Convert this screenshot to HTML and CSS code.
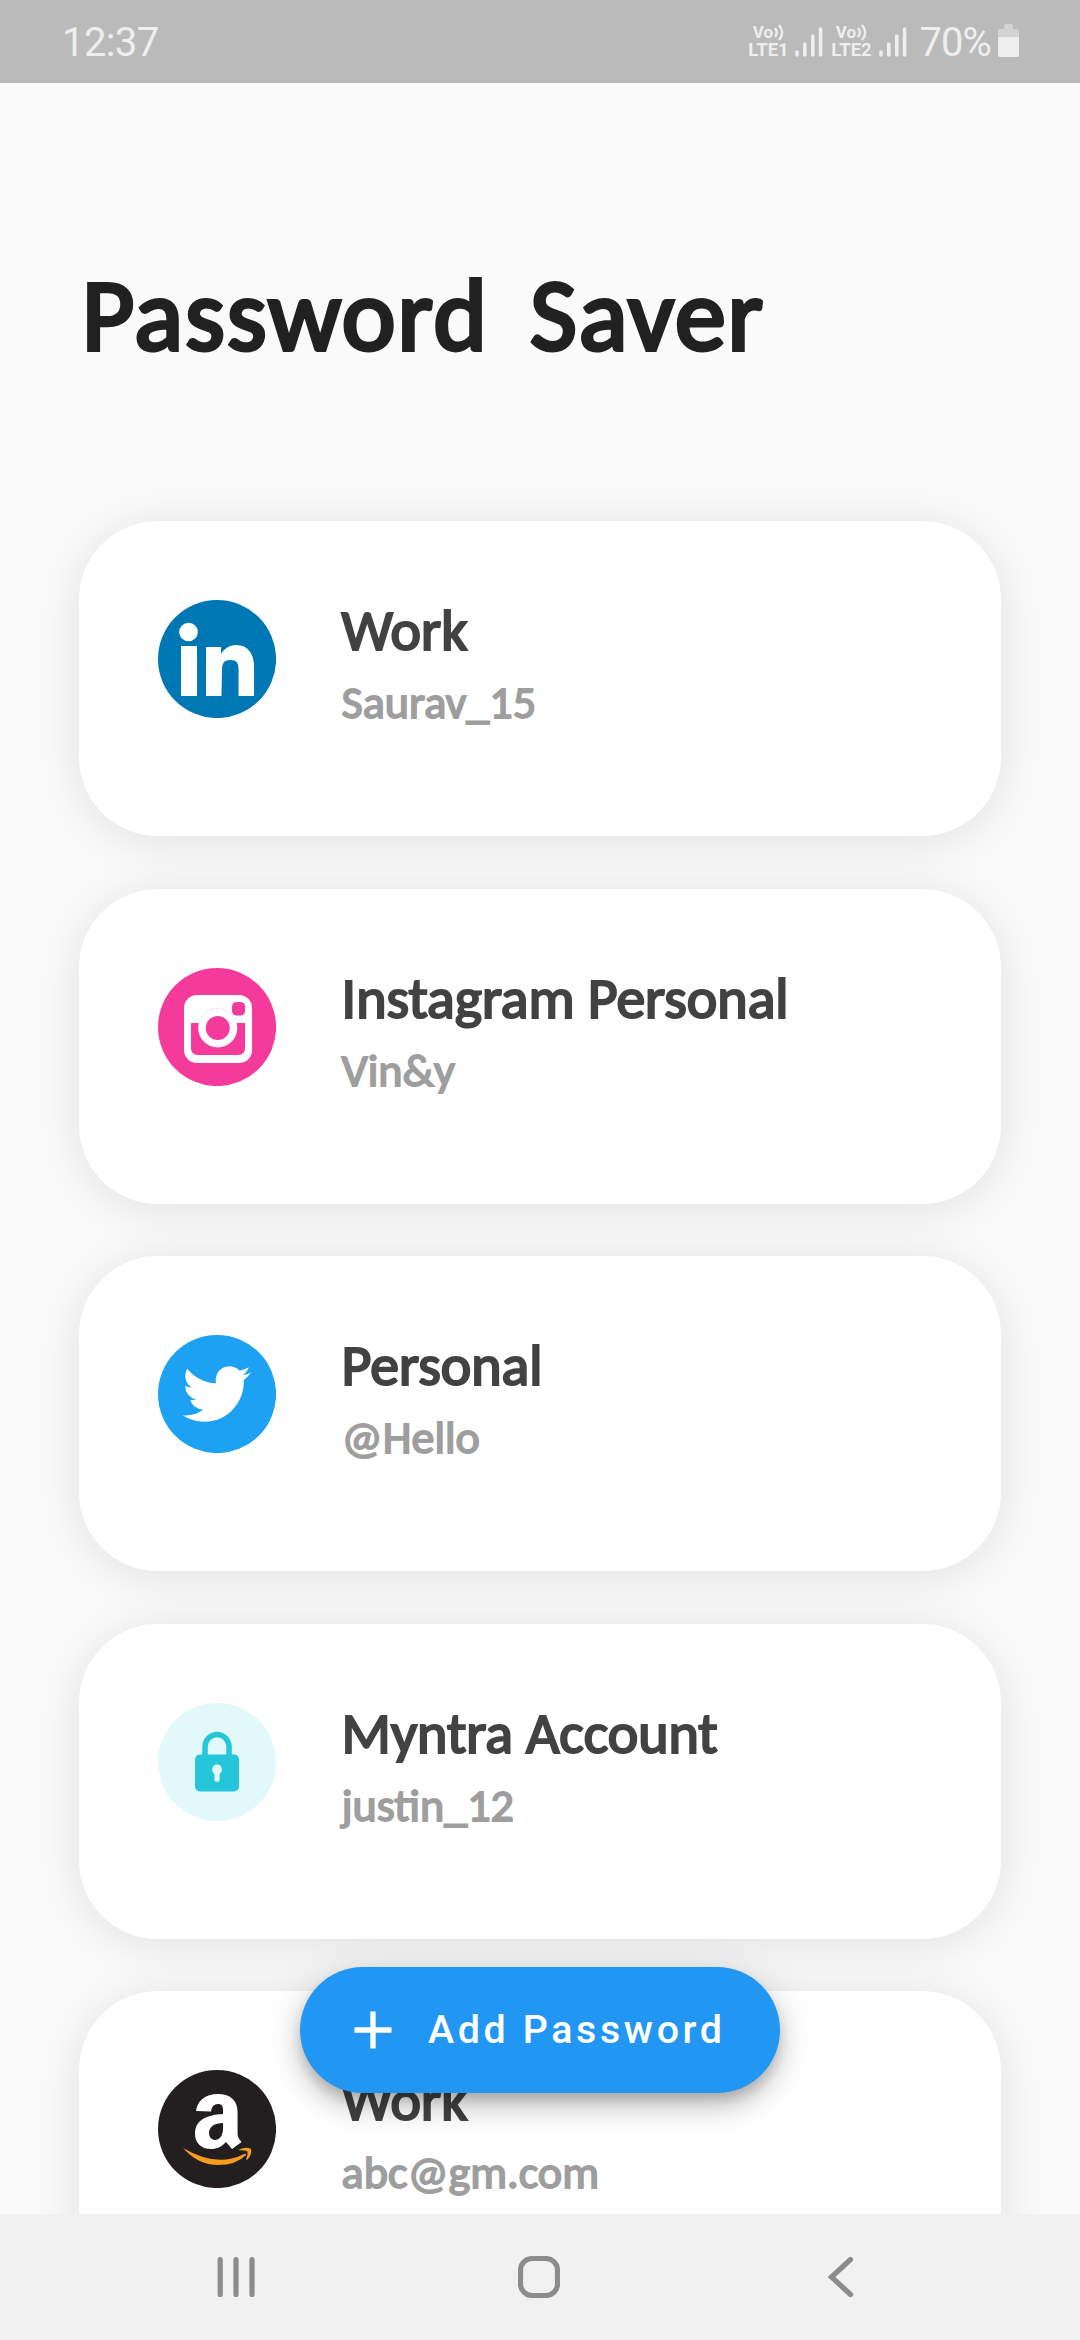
FILE: index.html
```html
<!DOCTYPE html>
<html lang="en">
<head>
<meta charset="utf-8">
<title>Password Saver</title>
<link rel="stylesheet" href="styles.css">
</head>
<body>
<div class="screen">
  <header class="status">
    <span class="clock">12:37</span>
    <div class="status-right">
      <div class="lte"><span class="vo">Vo<svg class="waves" viewBox="0 0 10 17"><path d="M1 4q3.600 4.500 0 9M5 1q6.400 7.500 0 15"/></svg></span><span class="net">LTE1</span></div>
      <svg class="bars" viewBox="0 0 28 30"><path d="M2 25v3M9.8 17v11M17.8 9v19M25.6 2v26"/></svg>
      <div class="lte second"><span class="vo">Vo<svg class="waves" viewBox="0 0 10 17"><path d="M1 4q3.600 4.500 0 9M5 1q6.400 7.500 0 15"/></svg></span><span class="net">LTE2</span></div>
      <svg class="bars" viewBox="0 0 28 30"><path d="M2 25v3M9.8 17v11M17.8 9v19M25.6 2v26"/></svg>
      <span class="percent">70%</span>
      <svg class="battery" viewBox="0 0 21 33"><path fill="#d3d3d3" d="M6 5V2q0-2 2-2h5q2 0 2 2v3h4q2 0 2 2v6H0V7q0-2 2-2z"/><path fill="#eee" d="M0 13h21v18q0 2-2 2H2q-2 0-2-2z"/></svg>
    </div>
  </header>

  <main class="content">
    <h1 class="title">Password Saver</h1>
    <section class="list">
      <article class="card">
        <svg class="logo" viewBox="0 0 118 118"><circle cx="59" cy="59" r="59" fill="#0077b5"/><g fill="#fff"><circle cx="30.5" cy="32" r="9.3"/><path d="M23 46h16v50H23zM48 47h15v7c3-5 8-9 15-9 12 0 18 9 18 22v29H80.500V69c0-6-2-9-8-9s-8.500 3-8.500 9l-.6 27H48z"/></g></svg>
        <div class="info"><h2 class="name">Work</h2><p class="user">Saurav_15</p></div>
      </article>
      <article class="card">
        <svg class="logo" viewBox="0 0 118 118"><circle cx="59" cy="59" r="59" fill="#f43b9c"/><rect x="26" y="27" width="68" height="68" rx="13" fill="#fff"/><path d="M33 55h54v25q0 7-7 7H40q-7 0-7-7z" fill="#f43b9c"/><rect x="74" y="34" width="13" height="13.500" rx="4.500" fill="#f43b9c"/><circle cx="59.700" cy="60" r="19.500" fill="#fff"/><path d="M43.500 49a19.500 19.500 0 0 1 32.500 0" fill="none" stroke="#f43b9c" stroke-width=".6" stroke-dasharray="1.500 2" opacity=".6"/><circle cx="59.700" cy="60" r="12" fill="#f43b9c"/></svg>
        <div class="info"><h2 class="name">Instagram Personal</h2><p class="user">Vin&amp;y</p></div>
      </article>
      <article class="card">
        <svg class="logo" viewBox="0 0 118 118"><circle cx="59" cy="59" r="59" fill="#1da1f2"/><path fill="#fff" transform="translate(24.500 24.800) scale(2.840)" d="M23.954 4.569a10 10 0 0 1-2.825.775 4.958 4.958 0 0 0 2.163-2.723c-.951.555-2.005.959-3.127 1.184a4.920 4.920 0 0 0-8.384 4.482C7.691 8.094 4.066 6.130 1.640 3.161a4.822 4.822 0 0 0-.666 2.475c0 1.710.870 3.213 2.188 4.096a4.904 4.904 0 0 1-2.228-.616v.061a4.923 4.923 0 0 0 3.946 4.827 4.996 4.996 0 0 1-2.212.085 4.937 4.937 0 0 0 4.604 3.417 9.868 9.868 0 0 1-6.102 2.105c-.390 0-.779-.023-1.170-.067a13.995 13.995 0 0 0 7.557 2.209c9.054 0 13.999-7.496 13.999-13.986 0-.209 0-.420-.015-.630a9.936 9.936 0 0 0 2.460-2.548z"/></svg>
        <div class="info"><h2 class="name">Personal</h2><p class="user">@Hello</p></div>
      </article>
      <article class="card">
        <svg class="logo" viewBox="0 0 118 118"><circle cx="59" cy="59" r="59" fill="#e2f8fb"/><path d="M47 54V44a12 12.500 0 0 1 24 0v10" fill="none" stroke="#26c6da" stroke-width="5.500"/><rect x="37" y="51.500" width="44" height="37" rx="5" fill="#26c6da"/><path fill="#e2f8fb" d="M59 61.500a5 5 0 0 1 2.600 9.200v5.600a2.600 2.600 0 0 1-5.200 0v-5.600A5 5 0 0 1 59 61.500z"/></svg>
        <div class="info"><h2 class="name">Myntra Account</h2><p class="user">justin_12</p></div>
      </article>
      <article class="card">
        <svg class="logo" viewBox="0 0 118 118"><circle cx="59" cy="59" r="59" fill="#231f20"/><path fill="#fff" fill-rule="evenodd" d="M38 41c1-10 9-17 22-17 13 0 19.500 7 19.500 18v21c0 4 1.500 6 4 9L74 79l-6-7c-5 5-9 7-15 7-10 0-16-6-16-15.500 0-12.500 10-18.500 28-19.500v-4c0-4-1.500-6-5-6-4 0-6.500 3-7 7.500zM65 53c-9 0-14 4-14 10 0 4 2.500 7 6 7 5 0 8-5 8-12z"/><g fill="#f79c1d"><path d="M25 78q34 20 61 6 2-1 2 1-10 10-28 10Q40 95 25 78z"/><path d="M80 80q8-4 13-1 1 6-4 11l-1-.5q2-5 1.500-8-3-1.500-9.500-1.500z"/></g></svg>
        <div class="info"><h2 class="name">Work</h2><p class="user">abc@gm.com</p></div>
      </article>
    </section>
    <button class="fab"><svg class="plus" viewBox="0 0 38 38"><path d="M19 .5v37M.5 19h37"/></svg><span>Add Password</span></button>
  </main>

  <nav class="navbar">
    <svg class="nav-icon" viewBox="0 0 42 42"><path d="M4.200 3.500v35M20 3.500v35M36 3.500v35"/></svg>
    <svg class="nav-icon" viewBox="0 0 42 42"><rect x="2.500" y="2.500" width="37" height="37" rx="11.500"/></svg>
    <svg class="nav-icon" viewBox="0 0 42 42"><path d="M31.500 3.500 12.500 21l19 17.500"/></svg>
  </nav>
</div>
</body>
</html>
```
FILE: styles.css
```css
* { box-sizing: border-box; margin: 0; padding: 0; }

body {
  width: 1080px;
  height: 2340px;
  overflow: hidden;
  font-family: Carlito, Calibri, Lato, sans-serif;
}

.screen {
  display: flex;
  flex-direction: column;
  height: 2340px;
  background: #fafafa;
}

.status {
  display: flex;
  align-items: flex-start;
  justify-content: space-between;
  flex: none;
  height: 83px;
  padding: 0 61px 0 62px;
  background: #bababa;
  color: #eee;
  font-family: Roboto, sans-serif;
}

.clock { padding-top: 20px; font-size: 40px; line-height: 46px; letter-spacing: -0.6px; }

.status-right { display: flex; align-items: flex-start; padding-top: 24px; }

.lte { display: flex; flex-direction: column; align-items: center; width: 38px; font-weight: 700; }
.second { margin-left: 8px; width: 40px; }

.vo { display: flex; height: 17.5px; font-size: 17px; line-height: 17px; }
.net { height: 17px; font-size: 18.5px; line-height: 17.5px; }
.waves { width: 10px; height: 17px; margin-left: 1px; fill: none; stroke: #eee; stroke-width: 2.4; }

.bars { width: 28px; height: 30px; margin: 2.5px 0 0 8px; fill: none; stroke: #eee; stroke-width: 3.6; stroke-linecap: round; }

.percent { margin: -4px 0 0 12px; font-size: 40px; line-height: 46px; letter-spacing: -0.9px; }

.battery { width: 21px; height: 33px; margin-left: 7px; }

.content {
  position: relative;
  flex: 1;
  overflow: hidden;
  padding: 166.5px 78.75px 0;
}

.title {
  height: 271.8px;
  padding-left: 3px;
  font-size: 102px;
  font-weight: 400;
  line-height: 130px;
  letter-spacing: 1.9px;
  word-spacing: 16px;
  color: #212121;
  -webkit-text-stroke: 0.038em #212121;
  white-space: nowrap;
}

.list { display: flex; flex-direction: column; gap: 52.5px; }

.card {
  display: flex;
  flex: none;
  gap: 66px;
  height: 315px;
  padding: 78.75px;
  border-radius: 78.75px;
  background: #fff;
  box-shadow: 0 5px 48px rgba(0, 0, 0, 0.1);
}

.logo { flex: none; width: 118.1px; height: 118.1px; }

.info { display: flex; flex-direction: column; margin-top: -4px; }

.name {
  font-size: 57.75px;
  font-weight: 400;
  line-height: 70px;
  color: #424242;
  -webkit-text-stroke: 0.038em #424242;
  white-space: nowrap;
}

.user {
  font-size: 46.1px;
  line-height: 58px;
  margin-top: 7px;
  color: #9e9e9e;
  -webkit-text-stroke: 0.038em #9e9e9e;
}

.fab {
  position: absolute;
  left: 300px;
  bottom: 120.5px;
  display: flex;
  align-items: center;
  gap: 36px;
  width: 480px;
  height: 126px;
  padding-left: 54px;
  border: 0;
  border-radius: 63px;
  background: #2196f3;
  color: #fff;
  font: 500 39.4px/46px Roboto, sans-serif;
  letter-spacing: 3.6px;
  white-space: nowrap;
  box-shadow: 0 8px 13px -2px rgba(0, 0, 0, 0.2), 0 16px 26px rgba(0, 0, 0, 0.14), 0 3px 47px rgba(0, 0, 0, 0.12);
}

.plus { flex: none; width: 38px; height: 38px; fill: none; stroke: #fff; stroke-width: 5.3; }

.navbar {
  display: flex;
  align-items: center;
  flex: none;
  gap: 259.5px;
  height: 126.5px;
  padding-left: 216px;
  background: #f1f1f1;
}

.nav-icon {
  width: 42px;
  height: 42px;
  fill: none;
  stroke: #8c8c8c;
  stroke-width: 5.2;
  stroke-linecap: round;
}
```
